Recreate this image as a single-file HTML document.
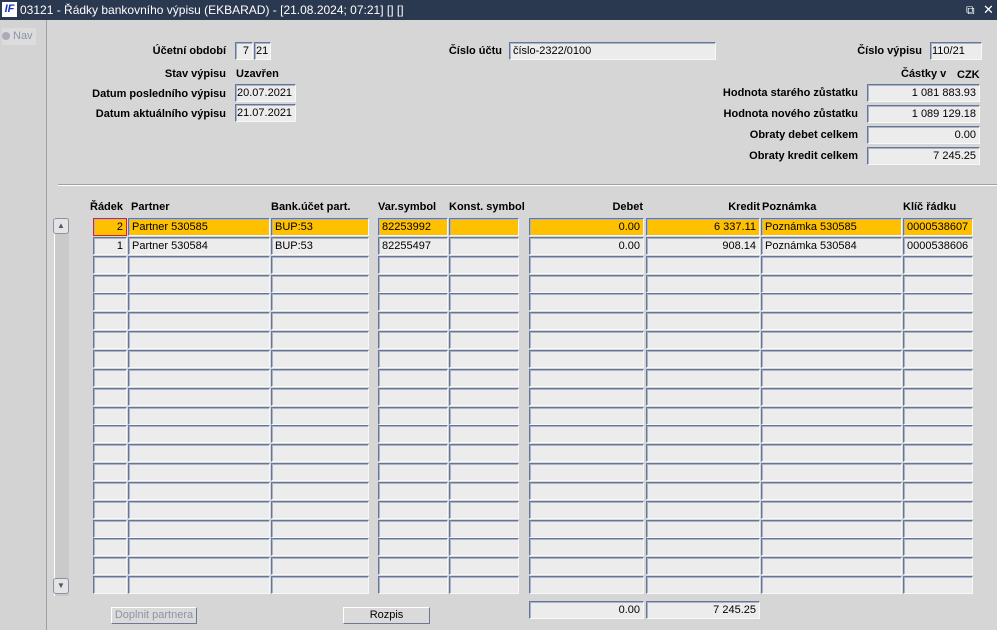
<!DOCTYPE html>
<html><head><meta charset="utf-8"><style>
body{margin:0;width:997px;height:630px;background:#d6d6d6;font-family:"Liberation Sans",sans-serif;font-size:11px;color:#000;position:relative;overflow:hidden}
.a{position:absolute;white-space:nowrap}
.t{left:0;top:0;width:997px;height:20px;background:#2a3850;color:#fff;font-size:12px;line-height:20px}
.f{position:absolute;box-sizing:border-box;height:18px;background:#ececec;border:1px solid;border-color:#66769a #f8f8f8 #f8f8f8 #66769a;box-shadow:inset 1px 1px 0 #a9b3c6;line-height:16px;padding:0 3px;white-space:nowrap;overflow:hidden}
.r{text-align:right}
.y{background:#ffc000}
.l{font-weight:bold;text-align:right}
.h{font-weight:bold}
.btn{position:absolute;box-sizing:border-box;height:17px;border:1px solid;border-color:#fff #6d7790 #6d7790 #fff;background:#dadada;text-align:center;line-height:15px}
</style></head><body>
<div class="a t"><span style="position:absolute;left:2px;top:2px;width:15px;height:15px;background:#fff;color:#1a2fc0;font:bold italic 11px/15px 'Liberation Sans',sans-serif;text-align:center">IF</span><span style="position:absolute;left:20px">03121 - Řádky bankovního výpisu (EKBARAD) - [21.08.2024; 07:21] [] []</span><span style="position:absolute;left:966px;font-size:12px">⧉</span><span style="position:absolute;left:983px;font-size:13px">✕</span></div>
<div class="a" style="left:0;top:20px;width:46px;height:610px;background:#d3d3d3;border-right:1px solid #9aa0aa"></div>
<div class="a" style="left:2px;top:28px;width:34px;height:17px;background:#dcdcdc;color:#8a94a6;line-height:17px"><span style="display:inline-block;width:8px;height:8px;border-radius:50%;background:#aab;vertical-align:-1px;margin-right:3px"></span>Nav</div>

<div class="a l" style="right:771px;top:45px">Účetní období</div>
<div class="f r" style="left:235px;top:42px;width:18px">7</div>
<div class="f" style="left:254px;top:42px;width:17px;padding:0 1px">21</div>
<div class="a l" style="right:771px;top:68px">Stav výpisu</div>
<div class="a h" style="left:236px;top:68px">Uzavřen</div>
<div class="a l" style="right:771px;top:88px">Datum posledního výpisu</div>
<div class="f" style="left:235px;top:84px;width:61px;padding:0 1px">20.07.2021</div>
<div class="a l" style="right:771px;top:108px">Datum aktuálního výpisu</div>
<div class="f" style="left:235px;top:104px;width:61px;padding:0 1px">21.07.2021</div>

<div class="a l" style="right:495px;top:45px">Číslo účtu</div>
<div class="f" style="left:509px;top:42px;width:207px">číslo-2322/0100</div>

<div class="a l" style="right:75px;top:45px">Číslo výpisu</div>
<div class="f" style="left:930px;top:42px;width:52px;padding:0 1px">110/21</div>
<div class="a h" style="left:901px;top:68px">Částky v</div>
<div class="a h" style="left:957px;top:69px">CZK</div>
<div class="a l" style="right:139px;top:87px">Hodnota starého zůstatku</div>
<div class="f r" style="left:867px;top:84px;width:113px">1 081 883.93</div>
<div class="a l" style="right:139px;top:108px">Hodnota nového zůstatku</div>
<div class="f r" style="left:867px;top:105px;width:113px">1 089 129.18</div>
<div class="a l" style="right:139px;top:129px">Obraty debet celkem</div>
<div class="f r" style="left:867px;top:126px;width:113px">0.00</div>
<div class="a l" style="right:139px;top:150px">Obraty kredit celkem</div>
<div class="f r" style="left:867px;top:147px;width:113px">7 245.25</div>

<div class="a" style="left:58px;top:184px;width:939px;height:1px;background:#a0a0a0;border-bottom:1px solid #fff"></div>

<div class="a h" style="left:90px;top:201px">Řádek</div>
<div class="a h" style="left:131px;top:201px">Partner</div>
<div class="a h" style="left:271px;top:201px">Bank.účet part.</div>
<div class="a h" style="left:378px;top:201px">Var.symbol</div>
<div class="a h" style="left:449px;top:201px">Konst. symbol</div>
<div class="a h r" style="right:354px;top:201px">Debet</div>
<div class="a h r" style="right:237px;top:201px">Kredit</div>
<div class="a h" style="left:762px;top:201px">Poznámka</div>
<div class="a h" style="left:903px;top:201px">Klíč řádku</div>

<div class="a" style="left:54px;top:218px;width:14px;height:378px;background:#cacaca;border-left:1px solid #fff"></div>
<div class="a" style="left:53px;top:218px;width:14px;height:14px;border:1px solid #8a93a6;border-radius:3px;background:#e4e4e4;font-size:8px;line-height:14px;text-align:center;color:#556">▲</div>
<div class="a" style="left:53px;top:578px;width:14px;height:14px;border:1px solid #8a93a6;border-radius:3px;background:#e4e4e4;font-size:8px;line-height:14px;text-align:center;color:#556">▼</div>

<div id="g">
<div class="f r y" style="left:93px;top:218px;width:34px;border:1px solid #e02020">2</div>
<div class="f y" style="left:128px;top:218px;width:142px">Partner 530585</div>
<div class="f y" style="left:271px;top:218px;width:98px">BUP:53</div>
<div class="f y" style="left:378px;top:218px;width:70px">82253992</div>
<div class="f y" style="left:449px;top:218px;width:70px"></div>
<div class="f r y" style="left:529px;top:218px;width:115px">0.00</div>
<div class="f r y" style="left:646px;top:218px;width:114px">6 337.11</div>
<div class="f y" style="left:761px;top:218px;width:141px">Poznámka 530585</div>
<div class="f y" style="left:903px;top:218px;width:70px">0000538607</div>
<div class="f r" style="left:93px;top:237px;width:34px">1</div>
<div class="f" style="left:128px;top:237px;width:142px">Partner 530584</div>
<div class="f" style="left:271px;top:237px;width:98px">BUP:53</div>
<div class="f" style="left:378px;top:237px;width:70px">82255497</div>
<div class="f" style="left:449px;top:237px;width:70px"></div>
<div class="f r" style="left:529px;top:237px;width:115px">0.00</div>
<div class="f r" style="left:646px;top:237px;width:114px">908.14</div>
<div class="f" style="left:761px;top:237px;width:141px">Poznámka 530584</div>
<div class="f" style="left:903px;top:237px;width:70px">0000538606</div>
</div>
<script>
var c=[[93,34],[128,142],[271,98],[378,70],[449,70],[529,115],[646,114],[761,141],[903,70]],h='';
for(var r=2;r<20;r++)for(var i=0;i<c.length;i++)h+='<div class="f" style="left:'+c[i][0]+'px;top:'+Math.round(218+r*18.85)+'px;width:'+c[i][1]+'px"></div>';
document.getElementById('g').insertAdjacentHTML('beforeend',h);
</script>

<div class="btn" style="left:111px;top:607px;width:86px;color:#8a94a6">Doplnit partnera</div>
<div class="btn" style="left:343px;top:607px;width:87px">Rozpis</div>
<div class="f r" style="left:529px;top:601px;width:115px">0.00</div>
<div class="f r" style="left:646px;top:601px;width:114px">7 245.25</div>
</body></html>
